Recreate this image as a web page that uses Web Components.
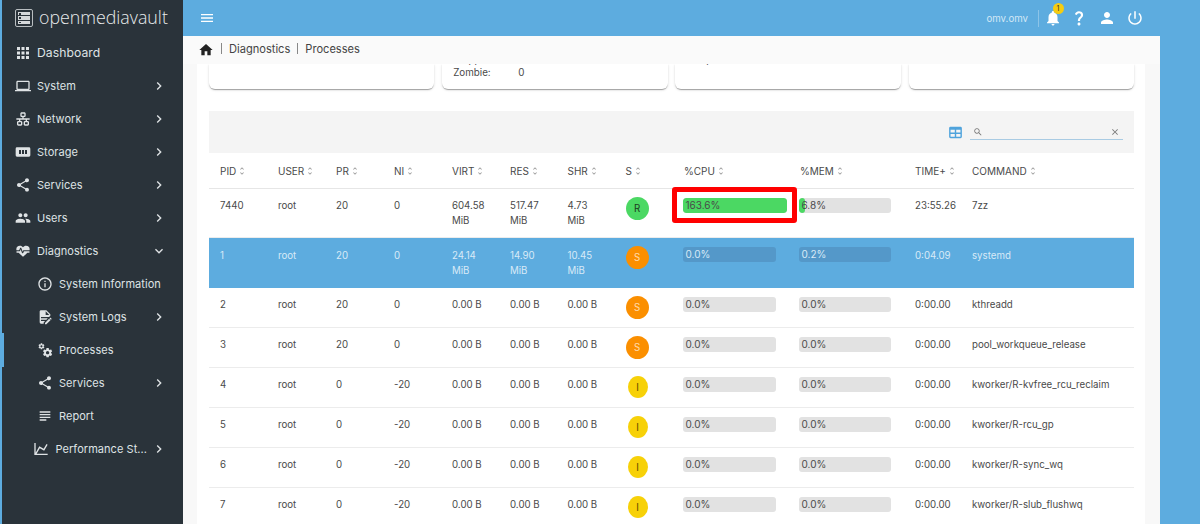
<!DOCTYPE html>
<html><head><meta charset="utf-8"><title>Processes</title>
<style>
html,body{margin:0;padding:0;background:#5dacdf;overflow:hidden;height:524px}
body{font-family:Inter,"Liberation Sans",sans-serif}
</style></head><body>
<omv-app></omv-app>
<script>
const P={
apps:"M4 8h4V4H4v4zm6 12h4v-4h-4v4zm-6 0h4v-4H4v4zm0-6h4v-4H4v4zm6 0h4v-4h-4v4zm6-10v4h4V4h-4zm-6 4h4V4h-4v4zm6 6h4v-4h-4v4zm0 6h4v-4h-4v4z",
laptop:"M20 18c1.1 0 1.99-.9 1.99-2L22 6c0-1.1-.9-2-2-2H4c-1.1 0-2 .9-2 2v10c0 1.1.9 2 2 2H0v2h24v-2h-4zM4 6h16v10H4V6z",
lan:"M10,2C8.89,2 8,2.89 8,4V7C8,8.11 8.89,9 10,9H11V11H2V13H6V15H5C3.89,15 3,15.89 3,17V20C3,21.11 3.89,22 5,22H9C10.11,22 11,21.11 11,20V17C11,15.89 10.11,15 9,15H8V13H16V15H15C13.89,15 13,15.89 13,17V20C13,21.11 13.89,22 15,22H19C20.11,22 21,21.11 21,20V17C21,15.89 20.11,15 19,15H18V13H22V11H13V9H14C15.11,9 16,8.11 16,7V4C16,2.89 15.11,2 14,2H10M10,4H14V7H10V4M5,17H9V20H5V17M15,17H19V20H15V17Z",
storage:"M3 5h18a2 2 0 0 1 2 2v10a2 2 0 0 1-2 2H3a2 2 0 0 1-2-2V7a2 2 0 0 1 2-2zm3 4v6h3V9H6zm4.5 0v6h3V9h-3zm4.5 0v6h3V9h-3z",
share:"M18 16.08c-.76 0-1.44.3-1.96.77L8.91 12.7c.05-.23.09-.46.09-.7s-.04-.47-.09-.7l7.05-4.11c.54.5 1.25.81 2.04.81 1.66 0 3-1.34 3-3s-1.34-3-3-3-3 1.34-3 3c0 .24.04.47.09.7L8.04 9.81C7.5 9.31 6.79 9 6 9c-1.66 0-3 1.34-3 3s1.34 3 3 3c.79 0 1.5-.31 2.04-.81l7.12 4.16c-.05.21-.08.43-.08.65 0 1.61 1.31 2.92 2.92 2.92 1.61 0 2.92-1.31 2.92-2.92s-1.31-2.92-2.92-2.92z",
people:"M16 11c1.66 0 2.99-1.34 2.99-3S17.66 5 16 5c-1.66 0-3 1.34-3 3s1.34 3 3 3zm-8 0c1.66 0 2.99-1.34 2.99-3S9.66 5 8 5C6.34 5 5 6.34 5 8s1.34 3 3 3zm0 2c-2.33 0-7 1.17-7 3.5V19h14v-2.5c0-2.33-4.67-3.5-7-3.5zm8 0c-.29 0-.62.02-.97.05 1.16.84 1.97 1.97 1.97 3.45V19h6v-2.5c0-2.33-4.67-3.5-7-3.5z",
heart:"M7.5,4A5.5,5.5 0 0,0 2,9.5C2,10 2.09,10.5 2.22,11H6.3L7.57,7.63C7.87,6.83 9.05,6.75 9.43,7.63L11.5,13L12.09,11.58C12.22,11.25 12.57,11 13,11H21.78C21.91,10.5 22,10 22,9.5A5.5,5.5 0 0,0 16.5,4C14.64,4 13,4.93 12,6.34C11,4.93 9.36,4 7.5,4M3,12.5A1,1 0 0,0 2,13.5A1,1 0 0,0 3,14.5H5.44L11,20C12,20.9 12,20.9 13,20L18.56,14.5H21A1,1 0 0,0 22,13.5A1,1 0 0,0 21,12.5H13.4L12.47,14.8C12.07,15.8 10.92,15.5 10.55,14.83L8.5,9.5L7.54,11.83C7.39,12.23 7.05,12.5 6.6,12.5H3Z",
info:"M11 7h2v2h-2zm0 4h2v6h-2zm1-9C6.48 2 2 6.48 2 12s4.48 10 10 10 10-4.48 10-10S17.52 2 12 2zm0 18c-4.41 0-8-3.59-8-8s3.59-8 8-8 8 3.59 8 8-3.59 8-8 8z",
logs:"M6,2C4.89,2 4,2.89 4,4V20A2,2 0 0,0 6,22H10V20.09L12.09,18H6V16H14.09L16.09,14H6V12H18.09L20,10.09V8L14,2H6M13,3.5L18.5,9H13V3.5M20.15,13C20,13 19.86,13.05 19.75,13.16L18.73,14.18L20.82,16.26L21.84,15.25C22.05,15.03 22.05,14.67 21.84,14.46L20.54,13.16C20.43,13.05 20.29,13 20.15,13M18.14,14.77L12,20.92V23H14.08L20.23,16.85L18.14,14.77Z",
cogs:"M15.9,18.45C17.25,18.45 18.35,17.35 18.35,16C18.35,14.65 17.25,13.55 15.9,13.55C14.54,13.55 13.45,14.65 13.45,16C13.45,17.35 14.54,18.45 15.9,18.45M21.1,16.68L22.58,17.84C22.71,17.95 22.75,18.13 22.66,18.29L21.26,20.71C21.17,20.86 21,20.92 20.83,20.86L19.09,20.16C18.73,20.44 18.34,20.67 17.91,20.85L17.64,22.7C17.62,22.87 17.47,23 17.3,23H14.5C14.32,23 14.18,22.87 14.15,22.7L13.89,20.85C13.46,20.67 13.07,20.44 12.71,20.16L10.96,20.86C10.81,20.92 10.62,20.86 10.54,20.71L9.14,18.29C9.05,18.13 9.09,17.95 9.22,17.84L10.7,16.68L10.65,16L10.7,15.31L9.22,14.16C9.09,14.05 9.05,13.86 9.14,13.71L10.54,11.29C10.62,11.13 10.81,11.07 10.96,11.13L12.71,11.84C13.07,11.56 13.46,11.32 13.89,11.15L14.15,9.29C14.18,9.13 14.32,9 14.5,9H17.3C17.47,9 17.62,9.13 17.64,9.29L17.91,11.15C18.34,11.32 18.73,11.56 19.09,11.84L20.83,11.13C21,11.07 21.17,11.13 21.26,11.29L22.66,13.71C22.75,13.86 22.71,14.05 22.58,14.16L21.1,15.31L21.15,16L21.1,16.68M6.69,8.07C7.56,8.07 8.26,7.37 8.26,6.5C8.26,5.63 7.56,4.92 6.69,4.92A1.58,1.58 0 0,0 5.11,6.5C5.11,7.37 5.82,8.07 6.69,8.07M10.03,6.94L11,7.68C11.07,7.75 11.09,7.87 11.03,7.97L10.13,9.53C10.08,9.63 9.96,9.67 9.86,9.63L8.74,9.18L8,9.62L7.81,10.81C7.79,10.92 7.7,11 7.59,11H5.79C5.67,11 5.58,10.92 5.56,10.81L5.4,9.62L4.64,9.18L3.5,9.63C3.41,9.67 3.3,9.63 3.24,9.53L2.34,7.97C2.28,7.87 2.31,7.75 2.39,7.68L3.34,6.94L3.31,6.5L3.34,6.06L2.39,5.32C2.31,5.25 2.28,5.13 2.34,5.03L3.24,3.47C3.3,3.37 3.41,3.33 3.5,3.37L4.63,3.82L5.4,3.38L5.56,2.19C5.58,2.08 5.67,2 5.79,2H7.59C7.7,2 7.79,2.08 7.81,2.19L8,3.38L8.74,3.82L9.86,3.37C9.96,3.33 10.08,3.37 10.13,3.47L11.03,5.03C11.09,5.13 11.07,5.25 11,5.32L10.03,6.06L10.06,6.5L10.03,6.94Z",
subject:"M14 17H4v2h10v-2zm6-8H4v2h16V9zM4 15h16v-2H4v2zM4 5v2h16V5H4z",
chart:"M16,11.78L20.24,4.45L21.97,5.45L16.74,14.5L10.23,10.75L5.46,19H22V21H2V3H4V17.54L9.5,8L16,11.78Z",
home:"M10 20v-6h4v6h5v-8h3L12 3 2 12h3v8z",
bell:"M12 22c1.1 0 2-.9 2-2h-4c0 1.1.89 2 2 2zm6-6v-5c0-3.07-1.64-5.64-4.5-6.32V4c0-.83-.67-1.5-1.5-1.5s-1.5.67-1.5 1.5v.68C7.63 5.36 6 7.92 6 11v5l-2 2v1h16v-1l-2-2z",
help:"M11.07,12.85c.77-1.39,2.25-2.21,3.11-3.44c.91-1.29,.4-3.7-2.18-3.7c-1.69,0-2.52,1.28-2.87,2.34L6.54,6.96C7.25,4.83,9.18,3,11.99,3c2.35,0,3.96,1.07,4.78,2.41c.7,1.15,1.11,3.3,.03,4.9c-1.2,1.77-2.35,2.31-2.97,3.45c-.25,.46-.35,.76-.35,2.24h-2.89C10.58,15.22,10.46,13.95,11.07,12.85z M14,20c0,1.1-.9,2-2,2s-2-.9-2-2c0-1.1,.9-2,2-2S14,18.9,14,20z",
person:"M12 12c2.21 0 4-1.79 4-4s-1.79-4-4-4-4 1.79-4 4 1.79 4 4 4zm0 2c-2.67 0-8 1.34-8 4v2h16v-2c0-2.66-5.33-4-8-4z",
power:"M13 3h-2v10h2V3zm4.83 2.17l-1.42 1.42C17.99 7.86 19 9.81 19 12c0 3.87-3.13 7-7 7s-7-3.13-7-7c0-2.19 1.01-4.14 2.58-5.42L6.17 5.17C4.23 6.82 3 9.26 3 12c0 4.97 4.03 9 9 9s9-4.03 9-9c0-2.74-1.23-5.18-3.17-6.83z",
menu:"M3 18h18v-2H3v2zm0-5h18v-2H3v2zm0-7v2h18V6H3z",
right:"M10 6L8.59 7.41 13.17 12l-4.58 4.59L10 18l6-6z",
down:"M16.59 8.59L12 13.17 7.41 8.59 6 10l6 6 6-6z",
search:"M15.5 14h-.79l-.28-.27C15.41 12.59 16 11.11 16 9.5 16 5.91 13.09 3 9.5 3S3 5.91 3 9.5 5.91 16 9.5 16c1.61 0 3.09-.59 4.23-1.57l.27.28v.79l5 4.99L20.49 19l-4.99-5zm-6 0C7.01 14 5 11.99 5 9.5S7.01 5 9.5 5 14 7.01 14 9.5 11.99 14 9.5 14z",
close:"M19 6.41L17.59 5 12 10.59 6.41 5 5 6.41 10.59 12 5 17.59 6.41 19 12 13.41 17.59 19 19 17.59 13.41 12z",
table:"M5,4H19A2,2 0 0,1 21,6V18A2,2 0 0,1 19,20H5A2,2 0 0,1 3,18V6A2,2 0 0,1 5,4M5,8V12H11V8H5M13,8V12H19V8H13M5,14V18H11V14H5M13,14V18H19V14H13Z",
sort:"M12 5.83L15.17 9l1.41-1.41L12 3 7.41 7.59 8.83 9 12 5.83zm0 12.34L8.83 15l-1.41 1.41L12 21l4.59-4.59L15.17 15 12 18.17z"
};
const ico=(n,s,c='currentColor',extra='')=>`<svg width="${s}" height="${s}" viewBox="0 0 24 24" fill="${c}" style="display:block;flex:none;${extra}"><path fill-rule="evenodd" d="${P[n]}"/></svg>`;
const def=(name,css,html)=>customElements.define(name,class extends HTMLElement{
  constructor(){super();this.attachShadow({mode:'open'})}
  connectedCallback(){this.shadowRoot.innerHTML=`<style>${css}</style>`+(typeof html==='function'?html(this):html)}
});

def('omv-nav-item',`
:host{display:flex;align-items:center;height:33px;color:#dfe3e5;font-size:11px;position:relative}
.i{width:16px;display:flex;justify-content:center;flex:none;margin-left:var(--il,13px)}
.t{margin-left:var(--tg,6px);white-space:nowrap;letter-spacing:.05px}
.c{position:absolute;left:149px;top:8.5px}
`,e=>{
  const s=+(e.getAttribute('size')||16);
  const ch=e.getAttribute('chev');
  return `<span class="i">${ico(e.getAttribute('icon'),s)}</span><span class="t">${e.getAttribute('label')}</span>${ch?`<span class="c">${ico(ch,16)}</span>`:''}`;
});

def('omv-sidebar',`
:host{display:flex;flex-direction:column;width:181px;flex:none;background:#2a333a;margin-left:2px;height:524px;position:relative}
.logo{height:36px;display:flex;align-items:center;color:#e8ebec;flex:none}
.mark{width:18px;height:18px;margin-left:13px;border:1px solid #b9bec1;border-radius:2px;box-sizing:border-box;padding:2px;display:flex;flex-direction:column;gap:1px}
.mark i{flex:1;background:#d5d8da;display:block;position:relative}
.mark i::before{content:"";position:absolute;left:1px;top:1px;width:1.5px;height:1.5px;background:#2a333a}
.name{margin-left:6px;font-family:"Open Sans",sans-serif;font-weight:300;font-size:17.8px;line-height:20px;margin-top:-3px}
`,`<div class="logo"><span class="mark"><i></i><i></i><i></i></span><span class="name">openmediavault</span></div>
<omv-nav-item style="font-size:12.2px" icon="apps" size="18" label="Dashboard"></omv-nav-item>
<omv-nav-item icon="laptop" label="System" chev="right"></omv-nav-item>
<omv-nav-item icon="lan" label="Network" chev="right"></omv-nav-item>
<omv-nav-item icon="storage" label="Storage" chev="right"></omv-nav-item>
<omv-nav-item icon="share" label="Services" chev="right"></omv-nav-item>
<omv-nav-item icon="people" label="Users" chev="right"></omv-nav-item>
<omv-nav-item icon="heart" label="Diagnostics" chev="down"></omv-nav-item>
<omv-nav-item style="--il:35px" icon="info" label="System Information"></omv-nav-item>
<omv-nav-item style="--il:35px" icon="logs" label="System Logs" chev="right"></omv-nav-item>
<omv-nav-item style="--il:35px" icon="cogs" label="Processes"></omv-nav-item>
<omv-nav-item style="--il:35px" icon="share" label="Services" chev="right"></omv-nav-item>
<omv-nav-item style="--il:35px" icon="subject" label="Report"></omv-nav-item>
<omv-nav-item style="--il:30.5px;--tg:7px" icon="chart" label="Performance St..." chev="right"></omv-nav-item>
<slot></slot>`);

def('omv-topbar',`
:host{display:flex;align-items:center;height:36px;color:#fff;flex:none;background:#5dacdf;width:1017px;box-sizing:border-box;position:relative}
.m{margin-left:16px}
.sp{flex:1}
.h{font-size:9.7px;color:#d2e7f6;margin-right:9.5px}
.d{width:1px;height:17px;background:#8cc4e8;margin-right:5px}
.b{position:relative;width:18px;height:18px;margin-right:8.5px}
.badge{position:absolute;left:9px;top:-6px;width:11px;height:11px;border-radius:50%;background:#f6cd10;color:#333;font-size:7px;line-height:11px;text-align:center}
.g{margin-right:10px}
`,`<span class="m">${ico('menu',16)}</span><span class="sp"></span>
<span class="h">omv.omv</span><span class="d"></span>
<span class="b">${ico('bell',18)}<span class="badge">1</span></span>
<span class="g">${ico('help',18)}</span><span class="g">${ico('person',18)}</span><span style="margin-right:56px">${ico('power',18)}</span>`);

def('omv-breadcrumb',`
:host{display:flex;align-items:center;height:28px;background:#fafafa;color:#444;font-size:11.1px;flex:none;width:977px;box-sizing:border-box;padding-left:15px;position:relative;z-index:1}
.s{width:1px;height:11px;background:#888;margin:0 7px 0 7px}
.t{margin-top:-3px;display:flex;align-items:center}
`,`<span class="t">${ico('home',16,'#222','margin-top:3px')}<span class="s" style="margin-left:6.5px;margin-right:7.5px"></span>Diagnostics<span class="s"></span>Processes</span>`);

def('omv-card',`
:host{display:flex;flex:1;flex-direction:column;justify-content:flex-end;height:25px;background:#fff;border-radius:0 0 6px 6px;box-shadow:0 2px 1px -1px rgba(0,0,0,.2),0 1px 1px rgba(0,0,0,.14),0 1px 3px rgba(0,0,0,.12);overflow:hidden;font-size:9.8px;color:#4a4a4a;box-sizing:border-box;padding:0 11px 10.5px}
.r{display:grid;grid-template-columns:65px 1fr;line-height:13px;height:13px;flex:none}
`,e=>(e.getAttribute('rows')||'').split('|').filter(Boolean).map(r=>{const[a,b]=r.split(':');return `<div class="r"><span>${a?a+':':''}</span><span>${b||''}</span></div>`}).join(''));

def('omv-progress',`
:host{display:block;height:15px;border-radius:3px;background:#e2e2e2;position:relative;overflow:hidden;font-size:10px;line-height:15px;color:#4a4a4a;margin-left:-1px}
:host([light]){background:#5498c9;color:#d8eaf7}
.f{position:absolute;left:0;top:0;bottom:0;background:#4bd863;border-radius:3px}
.t{position:relative;padding-left:2.5px}
`,e=>`<div class="f" style="width:${e.getAttribute('fill')||0}px"></div><div class="t">${e.getAttribute('value')}</div>`);

const COLS='58px 58px 58px 58px 58px 57.5px 58px 58.5px 116px 115px 57px 1fr';
const rows=[
['7440','root','20','0','604.58<br>MiB','517.47<br>MiB','4.73<br>MiB','R','163.6%','6.8%','23:55.26','7zz',49],
['1','root','20','0','24.14<br>MiB','14.90<br>MiB','10.45<br>MiB','S','0.0%','0.2%','0:04.09','systemd',50],
['2','root','20','0','0.00 B','0.00 B','0.00 B','S','0.0%','0.0%','0:00.00','kthreadd',40],
['3','root','20','0','0.00 B','0.00 B','0.00 B','S','0.0%','0.0%','0:00.00','pool_workqueue_release',40],
['4','root','0','-20','0.00 B','0.00 B','0.00 B','I','0.0%','0.0%','0:00.00','kworker/R-kvfree_rcu_reclaim',40],
['5','root','0','-20','0.00 B','0.00 B','0.00 B','I','0.0%','0.0%','0:00.00','kworker/R-rcu_gp',40],
['6','root','0','-20','0.00 B','0.00 B','0.00 B','I','0.0%','0.0%','0:00.00','kworker/R-sync_wq',40],
['7','root','0','-20','0.00 B','0.00 B','0.00 B','I','0.0%','0.0%','0:00.00','kworker/R-slub_flushwq',40]
];
const heads=['PID','USER','PR','NI','VIRT','RES','SHR','S','%CPU','%MEM','TIME+','COMMAND'];
def('omv-table',`
:host{display:block;position:relative;font-size:9.7px;color:#4a4a4a}
.bar{height:42px;background:#f4f4f4;display:flex;align-items:center;justify-content:flex-end;padding-right:11px;box-sizing:border-box}
.search{width:153px;height:15px;border-bottom:1px solid #a9cbe3;display:flex;align-items:center;justify-content:space-between;margin:0 0 0 6px;padding:0 3px;box-sizing:border-box}
.row{display:grid;grid-template-columns:${COLS};box-sizing:border-box;border-bottom:1px solid #ececec}
.row>div{padding:9px 0 0 11px;line-height:15px;min-width:0;white-space:nowrap}
.head{height:36px;border-bottom:1px solid #e6e6e6}
.head>div{padding:1px 0 0 11px!important;display:flex;align-items:center;gap:1px;height:35px;box-sizing:border-box;font-size:10px}
.sel{background:#5dacdf;color:#d8eaf7;border-bottom-color:#5dacdf}
.sel>div{padding-top:10px}
.b{display:flex;align-items:center;justify-content:center;border-radius:50%;font-size:9.7px}
.bw{padding:8px 0 0 11px!important}
.R,.S{width:23px;height:23px}.R{background:#4bd863;color:#1e3a22}.S{background:#fb8f00;color:#ffdcae}
.I{width:20px;height:22px;margin-left:2px;background:#f7d108;color:#5a4c00}
.mark{position:absolute;left:463px;top:76px;width:125px;height:36px;border:5px solid #f00;border-radius:3px;box-sizing:border-box}
`,`<div class="bar">${ico('table',17,'#4fa3dc')}<div class="search">${ico('search',10,'#777')}${ico('close',10,'#777')}</div></div>
<div class="row head">${heads.map(h=>`<div>${h}${ico('sort',10,'#999')}</div>`).join('')}</div>
${rows.map((r,i)=>`<div class="row ${i==1?'sel':''}" style="height:${r[12]}px">
${r.slice(0,7).map(c=>`<div>${c}</div>`).join('')}
<div class="bw"><span class="b ${r[7]}" >${r[7]}</span></div>
<div style="padding-top:9px"><omv-progress ${i==1?'light':''} value="${r[8]}" fill="${i==0?104:0}" style="width:${i==0?104:93}px"></omv-progress></div>
<div style="padding-top:9px"><omv-progress ${i==1?'light':''} value="${r[9]}" fill="${i==0?6:0}" style="width:92px"></omv-progress></div>
<div>${r[10]}</div><div>${r[11]}</div></div>`).join('')}
<div class="mark"></div>`);

def('omv-app',`
:host{display:flex;height:524px;overflow:hidden;background:#5dacdf}
.main{display:flex;flex-direction:column;flex:1;min-width:0}
.area{width:977px;background:#f8f8f8;flex:1;padding:0 15px 0 14px;box-sizing:border-box;min-height:0}
.page{background:#fff;height:100%;padding:0 11px 0 12px;box-sizing:border-box;overflow:hidden}
.cards{display:flex;gap:7.7px;margin-bottom:22px}
.mark{position:absolute;left:0;top:333px;width:4px;height:34px;background:#5dacdf}
`,`<omv-sidebar></omv-sidebar><span class="mark"></span>
<div class="main"><omv-topbar></omv-topbar><omv-breadcrumb></omv-breadcrumb>
<div class="area"><div class="page">
<div class="cards"><omv-card></omv-card><omv-card rows="Stopped:|Zombie:0"></omv-card><omv-card rows="Swap:|:"></omv-card><omv-card></omv-card></div>
<omv-table></omv-table></div></div></div>`);
</script></body></html>
